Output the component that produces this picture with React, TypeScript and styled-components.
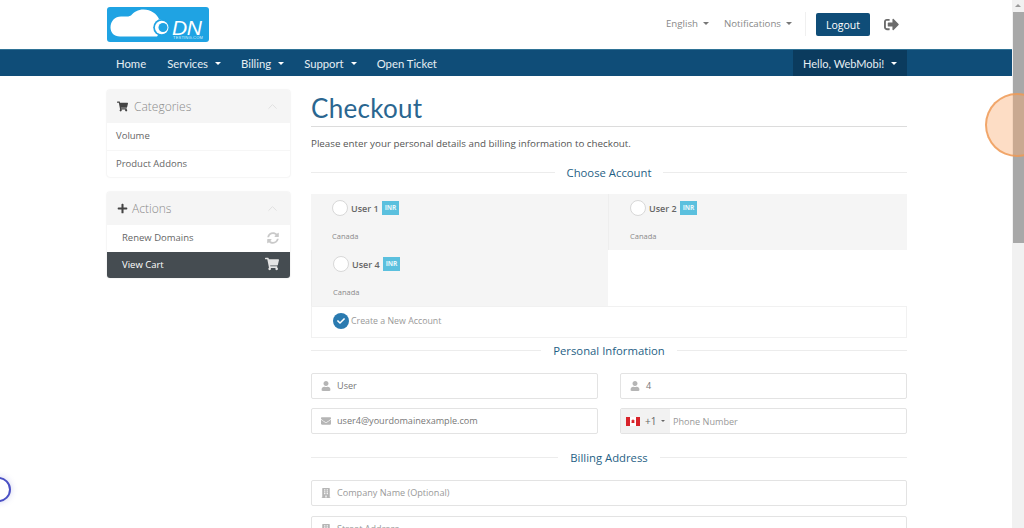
import React from 'react';
import styled, { createGlobalStyle } from 'styled-components';
import { ChevronUp } from 'lucide-react';
import {
  FaBuilding,
  FaCheck,
  FaEnvelope,
  FaPlus,
  FaShoppingCart,
  FaSignOutAlt,
  FaSyncAlt,
  FaUser,
} from 'react-icons/fa';

const GlobalStyle = createGlobalStyle`
  html, body {
    margin: 0;
    padding: 0;
    height: 528px;
    overflow: hidden;
    background: #fff;
    font-family: 'Open Sans', sans-serif;
    color: #58595b;
  }
  * { box-sizing: border-box; }
`;

const NAV_FONT = `'Lato', 'Inter', sans-serif`;

const Page = styled.div`
  position: relative;
  width: 1024px;
  height: 528px;
  overflow: hidden;
  padding-right: 12px;
`;

const Container = styled.div`
  width: 800px;
  margin-left: 107px;
`;

const Header = styled.header`
  height: 49px;
`;

const HeaderInner = styled(Container)`
  display: flex;
  align-items: center;
  height: 49px;
`;

const LogoWrap = styled.a`
  position: relative;
  display: block;
  width: 102px;
  height: 35px;
  margin-top: -1px;
  background: #1fa3e3;
  border-radius: 3px;
  overflow: hidden;
`;

const LogoText = styled.span`
  position: absolute;
  left: 65px;
  top: 13px;
  color: #fff;
  font: italic 400 21px/15px 'Liberation Sans', sans-serif;
  letter-spacing: -0.3px;
`;

const LogoSub = styled.span`
  position: absolute;
  left: 66px;
  top: 28px;
  color: #d8f1fc;
  font: 400 4px/5px 'Liberation Sans', sans-serif;
  letter-spacing: 0.2px;
`;

const TopLinks = styled.div`
  margin-left: auto;
  display: flex;
  align-items: center;
`;

const TopLink = styled.span<{ $gap: number }>`
  display: flex;
  align-items: center;
  gap: 5px;
  margin-right: ${(p) => p.$gap}px;
  margin-top: -2px;
  font-size: 9.7px;
  color: #888;
`;

const Caret = styled.i<{ $color?: string }>`
  display: inline-block;
  width: 0;
  height: 0;
  border-left: 3px solid transparent;
  border-right: 3px solid transparent;
  border-top: 3px solid ${(p) => p.$color || '#777'};
`;

const Divider = styled.span`
  width: 1px;
  height: 24px;
  margin: -1px 10px 0 0;
  background: #f0f0f0;
`;

const LogoutButton = styled.button`
  width: 54px;
  height: 23px;
  border: 0;
  border-radius: 2px;
  padding: 0;
  background: #0f4d78;
  color: #fff;
  font: 400 10.5px 'Open Sans', sans-serif;
`;

const LogoutIcon = styled.span`
  display: flex;
  margin: 0 8px 0 14px;
  color: #6b6b6b;
  font-size: 15px;
`;

const NavBar = styled.nav`
  height: 27px;
  background: #0f4d78;
  border-top: 1px solid #2f7396;
`;

const NavInner = styled(Container)`
  display: flex;
  align-items: center;
  height: 26px;
`;

const NavItem = styled.span<{ $gap: number }>`
  display: flex;
  align-items: center;
  gap: 7px;
  margin: 0 ${(p) => p.$gap}px 0 0;
  color: #e6eef3;
  font: 400 11.3px ${NAV_FONT};
`;

const NavList = styled.div`
  display: flex;
  align-items: center;
  padding-left: 9px;
`;

const UserMenu = styled.div`
  margin-left: auto;
  display: flex;
  align-items: center;
  gap: 7px;
  height: 26px;
  width: 114px;
  padding-left: 10px;
  background: #0b3b5e;
  color: #e6eef3;
  font: 400 11px ${NAV_FONT};
`;

const Columns = styled(Container)`
  display: flex;
  gap: 21px;
  padding-top: 14px;
`;

const Sidebar = styled.aside`
  width: 183px;
  flex: none;
  display: flex;
  flex-direction: column;
  gap: 15px;
`;

const Panel = styled.section`
  border-radius: 3px;
  box-shadow: 0 0 2px rgba(0, 0, 0, 0.14);
  overflow: hidden;
  background: #fff;
`;

const PanelHead = styled.div<{ $iconGap: number }>`
  display: flex;
  align-items: center;
  height: 33px;
  padding: 0 10px 0 10px;
  background: #f5f5f5;
  color: #8b8b8b;
  font-size: 12px;
  font-weight: 300;
  > svg:first-child { color: #444; margin-right: ${(p) => p.$iconGap}px; font-size: 11px; }
  > svg:last-child { margin-left: auto; color: #dedede; }
`;

const PanelRow = styled.div`
  height: 27px;
  display: flex;
  align-items: center;
  padding: 0 9px 2px;
  font-size: 9.5px;
  color: #666;
  & + & { border-top: 1px solid #f6f6f6; }
`;

const ActionRow = styled.div<{ $active?: boolean }>`
  height: 26.5px;
  display: flex;
  align-items: center;
  justify-content: space-between;
  padding: 0 11px 1px 15px;
  font-size: 9.5px;
  color: ${(p) => (p.$active ? '#fff' : '#666')};
  background: ${(p) => (p.$active ? '#454c51' : '#fff')};
  svg { font-size: ${(p) => (p.$active ? 14 : 12)}px; color: ${(p) => (p.$active ? '#e4e4e4' : '#c9c9c9')}; }
`;

const Main = styled.main`
  width: 596px;
  flex: none;
`;

const Title = styled.h1`
  margin: 0;
  height: 37px;
  border-bottom: 1px solid #dcdcdc;
  color: #2a6690;
  font: 400 26px/37px ${NAV_FONT};
  letter-spacing: 0.3px;
`;

const Intro = styled.p`
  margin: 10px 0 0;
  font-size: 9.8px;
  line-height: 14px;
  color: #555;
`;

const SubHeading = styled.div<{ $top: number; $bottom: number }>`
  display: flex;
  align-items: center;
  gap: 12px;
  margin: ${(p) => p.$top}px 0 ${(p) => p.$bottom}px;
  height: 14px;
  color: #1f5f85;
  font-size: 11.3px;
  white-space: nowrap;
  &::before,
  &::after {
    content: '';
    flex: 1;
    height: 1px;
    background: #ececec;
  }
`;

const AccountGrid = styled.div`
  display: grid;
  grid-template-columns: 297px 299px;
  grid-auto-rows: 56px;
  border-bottom: 1px solid #f1f1f1;
  border-right: 1px solid #f1f1f1;
`;

const AccountCell = styled.div`
  padding: 6px 0 0 21px;
  background: #f5f5f5;
  & + & { border-left: 1px solid #eee; }
`;

const EmptyCell = styled.div`
  background: #fff;
`;

const AccountName = styled.div`
  display: flex;
  align-items: center;
  height: 16px;
  font-size: 9px;
  font-weight: 600;
  color: #666;
`;

const Radio = styled.span`
  width: 16px;
  height: 16px;
  margin-right: 3px;
  border: 1px solid #d8d8d8;
  border-radius: 50%;
  background: #fff;
`;

const Badge = styled.span`
  margin-left: 3px;
  padding: 0 3px;
  height: 14px;
  background: #5bc0de;
  color: #e8f7fb;
  font-size: 6.5px;
  font-weight: 700;
  line-height: 14px;
`;

const AccountCountry = styled.div`
  margin: 15px 0 0;
  font-size: 7.5px;
  line-height: 10px;
  color: #8a8a8a;
`;

const CreateRow = styled.div`
  display: flex;
  align-items: center;
  height: 31px;
  padding: 0 0 2px 21px;
  border: 1px solid #f1f1f1;
  border-top: 0;
  font-size: 8.8px;
  color: #999;
`;

const CheckedRadio = styled.span`
  display: flex;
  align-items: center;
  justify-content: center;
  width: 16px;
  height: 16px;
  margin-right: 2px;
  border-radius: 50%;
  background: #2a7ab0;
  color: #fff;
  font-size: 8px;
`;

const FieldGrid = styled.div`
  display: grid;
  grid-template-columns: 287px 287px;
  column-gap: 22px;
  row-gap: 9px;
`;

const Field = styled.div<{ $full?: boolean }>`
  display: flex;
  align-items: center;
  height: 26px;
  padding: 0 0 1px 9px;
  border: 1px solid #e3e3e3;
  border-radius: 2px;
  font-size: 9.1px;
  color: #777;
  ${(p) => p.$full && 'grid-column: 1 / -1;'}
  svg { flex: none; width: 10px; margin-right: 6px; color: #b5b5b5; font-size: 10px; }
`;

const PhoneField = styled(Field)`
  padding: 0;
  overflow: hidden;
`;

const DialCode = styled.span`
  display: flex;
  align-items: center;
  height: 100%;
  width: 49px;
  padding-left: 5px;
  margin-right: 3px;
  background: #f2f2f2;
  color: #666;
  font-size: 10px;
  svg { width: 14px; margin-right: 5px; font-size: inherit; }
  i { margin-left: 5px; border-width: 2.5px 2px 0; }
`;

const Placeholder = styled.span`
  color: #999;
`;

const Stacked = styled.div`
  display: flex;
  flex-direction: column;
  gap: 10px;
`;

const Track = styled.div`
  position: absolute;
  top: 0;
  right: 0;
  width: 12px;
  height: 528px;
  background: #f1f1f1;
`;

const Thumb = styled.div`
  position: absolute;
  top: 12px;
  left: 1px;
  width: 11px;
  height: 231px;
  background: #a8a8a8;
`;

const ScrollArrow = styled.i`
  position: absolute;
  top: 4px;
  left: 3px;
  width: 0;
  height: 0;
  border-left: 3px solid transparent;
  border-right: 3px solid transparent;
  border-bottom: 3px solid #9a9a9a;
`;

const ClickSpot = styled.div`
  position: absolute;
  left: 985px;
  top: 93px;
  width: 64px;
  height: 64px;
  border-radius: 50%;
  border: 2px solid rgba(238, 152, 84, 0.8);
  background: rgba(250, 170, 110, 0.4);
`;

const HelpBubble = styled.div`
  position: absolute;
  left: -14px;
  top: 477px;
  width: 25px;
  height: 25px;
  border-radius: 50%;
  border: 2px solid #4a50c4;
  background: #fff;
  box-shadow: 0 0 6px rgba(74, 80, 196, 0.25);
`;

const Logo = () => (
  <LogoWrap>
    <svg width="102" height="35" viewBox="0 0 102 35">
      <path
        d="M13 29.500C7 29.500 3.500 25.500 3.500 20.500C3.500 14 8 9.500 14 9.500C18 9.500 21 10 24 8.500C27 5 31 2.500 36.500 2.500C44 2.500 50 7 52 12C55 12.500 57.500 14 58.500 17L50 29.500z"
        fill="#fff"
      />
      <circle cx="54.700" cy="20.500" r="8.500" fill="#1fa3e3" />
      <circle cx="54.700" cy="20.500" r="6.800" fill="#fff" />
      <circle cx="56" cy="20.500" r="4.500" fill="#1fa3e3" />
    </svg>
    <LogoText>DN</LogoText>
    <LogoSub>TESTING.COM</LogoSub>
  </LogoWrap>
);

const CanadaFlag = () => (
  <svg viewBox="0 0 14 9" height="9">
    <rect width="14" height="9" fill="#fff" />
    <rect width="4" height="9" fill="#d8232a" />
    <rect x="10" width="4" height="9" fill="#d8232a" />
    <path d="M7 2l.7 1.300.8-.3-.3 1.800.8.200L7.800 6H6.200L4.900 5l.9-.2-.3-1.800.8.300z" fill="#d8232a" />
  </svg>
);

const accounts = ['User 1', 'User 2', 'User 4'];

export default function App() {
  return (
    <>
      <GlobalStyle />
      <Page>
        <Header>
          <HeaderInner>
            <Logo />
            <TopLinks>
              <TopLink $gap={15}>
                English <Caret />
              </TopLink>
              <TopLink $gap={13}>
                Notifications <Caret />
              </TopLink>
              <Divider />
              <LogoutButton>Logout</LogoutButton>
              <LogoutIcon>
                <FaSignOutAlt />
              </LogoutIcon>
            </TopLinks>
          </HeaderInner>
        </Header>

        <NavBar>
          <NavInner>
            <NavList>
              <NavItem $gap={21}>Home</NavItem>
              <NavItem $gap={20}>
                Services <Caret $color="#fff" />
              </NavItem>
              <NavItem $gap={20}>
                Billing <Caret $color="#fff" />
              </NavItem>
              <NavItem $gap={20}>
                Support <Caret $color="#fff" />
              </NavItem>
              <NavItem $gap={0}>Open Ticket</NavItem>
            </NavList>
            <UserMenu>
              Hello, WebMobi! <Caret $color="#fff" />
            </UserMenu>
          </NavInner>
        </NavBar>

        <Columns>
          <Sidebar>
            <Panel>
              <PanelHead $iconGap={6}>
                <FaShoppingCart />
                Categories
                <ChevronUp size={15} strokeWidth={1.5} />
              </PanelHead>
              <PanelRow>Volume</PanelRow>
              <PanelRow>Product Addons</PanelRow>
            </Panel>
            <Panel>
              <PanelHead $iconGap={4}>
                <FaPlus />
                Actions
                <ChevronUp size={15} strokeWidth={1.5} />
              </PanelHead>
              <ActionRow>
                Renew Domains
                <FaSyncAlt />
              </ActionRow>
              <ActionRow $active>
                View Cart
                <FaShoppingCart />
              </ActionRow>
            </Panel>
          </Sidebar>

          <Main>
            <Title>Checkout</Title>
            <Intro>Please enter your personal details and billing information to checkout.</Intro>

            <SubHeading $top={14} $bottom={15}>Choose Account</SubHeading>
            <AccountGrid>
              {accounts.map((name) => (
                <AccountCell key={name}>
                  <AccountName>
                    <Radio />
                    {name}
                    <Badge>INR</Badge>
                  </AccountName>
                  <AccountCountry>Canada</AccountCountry>
                </AccountCell>
              ))}
              <EmptyCell />
            </AccountGrid>
            <CreateRow>
              <CheckedRadio>
                <FaCheck />
              </CheckedRadio>
              Create a New Account
            </CreateRow>

            <SubHeading $top={5} $bottom={16}>Personal Information</SubHeading>
            <FieldGrid>
              <Field>
                <FaUser />
                User
              </Field>
              <Field>
                <FaUser />4
              </Field>
              <Field>
                <FaEnvelope />
                user4@yourdomainexample.com
              </Field>
              <PhoneField>
                <DialCode>
                  <CanadaFlag />
                  +1
                  <Caret $color="#666" />
                </DialCode>
                <Placeholder>Phone Number</Placeholder>
              </PhoneField>
            </FieldGrid>

            <SubHeading $top={16} $bottom={16}>Billing Address</SubHeading>
            <Stacked>
              <Field $full>
                <FaBuilding />
                <Placeholder>Company Name (Optional)</Placeholder>
              </Field>
              <Field $full>
                <FaBuilding />
                <Placeholder>Street Address</Placeholder>
              </Field>
            </Stacked>
          </Main>
        </Columns>

        <Track>
          <ScrollArrow />
          <Thumb />
        </Track>
        <ClickSpot />
        <HelpBubble />
      </Page>
    </>
  );
}
